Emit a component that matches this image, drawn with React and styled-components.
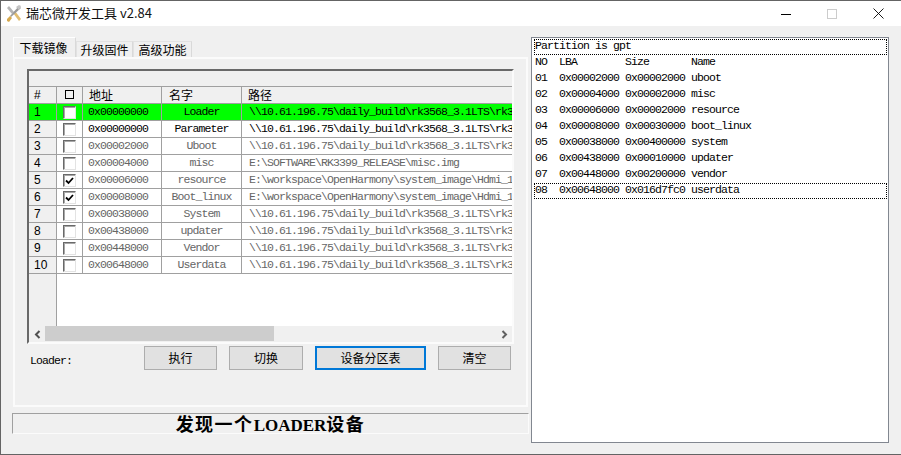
import styled, { createGlobalStyle } from 'styled-components'

const cjk = '"Noto Sans CJK SC", "Liberation Sans", sans-serif'
const mono = '"Liberation Mono", "Noto Sans CJK SC", monospace'
const line = '#a0a0a0'

const GlobalStyle = createGlobalStyle`
    html, body {
        margin: 0;
        padding: 0;
        background: #f0f0f0;
    }
    * {
        box-sizing: border-box;
    }
`

const Win = styled.div`
    width: 901px;
    height: 455px;
    background: #f0f0f0;
    border-left: 1px solid #646464;
    border-bottom: 1px solid #646464;
    border-top: 1px solid #646464;
    overflow: hidden;
`
const TitleBar = styled.header`
    height: 25px;
    background: #fff;
    display: flex;
    align-items: center;
    padding-left: 4px;
`
const AppTitle = styled.span`
    margin-left: 3px;
    font: 13px/21px ${cjk};
    color: #111;
    flex: 1;
    padding-bottom: 2px;
`
const WinButton = styled.div`
    width: 46px;
    height: 25px;
    display: flex;
    align-items: center;
    justify-content: center;
`
const Body = styled.div`
    display: flex;
    padding: 11px 11px 0 10px;
`
const LeftPane = styled.div`
    width: 518px;
`
const Tabs = styled.nav`
    display: flex;
    align-items: flex-end;
    height: 20px;
    padding-left: 2px;
`
const Tab = styled.div`
    width: ${(p) => p.$w}px;
    height: ${(p) => (p.$active ? 20 : 16)}px;
    background: #f0f0f0;
    border-top: 1px solid ${(p) => (p.$active ? '#fff' : '#e2e2e2')};
    border-left: 1px solid ${(p) => (p.$active ? '#fff' : '#e2e2e2')};
    border-right: 1px solid #d9d9d9;
    font: 12px/16px ${cjk};
    color: #000;
    text-align: center;
    white-space: nowrap;
    padding-top: ${(p) => (p.$active ? 2 : 0)}px;
    padding-right: ${(p) => (p.$active ? 2 : 0)}px;
`
const Panel = styled.section`
    width: 515px;
    height: 350px;
    margin-left: 2px;
    border: 2px solid #fbfbfb;
    padding: 10px 0 0 12px;
`
const GridFrame = styled.div`
    width: 487px;
    height: 275px;
    border-top: 2px solid #696969;
    border-left: 2px solid #696969;
    border-right: 2px solid #fbfbfb;
    border-bottom: 2px solid #fbfbfb;
    display: flex;
    flex-direction: column;
`
const TopBand = styled.div`
    height: 16px;
    border-bottom: 1px solid ${line};
    flex: none;
`
const Row = styled.div`
    display: grid;
    grid-template-columns: 28px 26px 79px 80px 1fr;
    height: 17px;
    flex: none;
    border-bottom: 1px solid ${line};
    background: ${(p) => (p.$selected ? '#00ff00' : '#fff')};
    color: ${(p) => (p.$muted ? '#666' : '#000')};
    font: 11.5px/16px ${mono};
    letter-spacing: -0.9px;
    overflow: hidden;
`
const HeadRow = styled(Row)`
    background: #f0f0f0;
    font: 12px/16px ${cjk};
    letter-spacing: 0;
    color: #000;
`
const Cell = styled.div`
    border-right: 1px solid ${line};
    white-space: nowrap;
    overflow: hidden;
    text-align: ${(p) => p.$align || 'left'};
    padding-left: ${(p) => p.$pad || 0}px;
    &:last-child {
        border-right: 0;
    }
`
const NumCell = styled(Cell)`
    background: ${(p) => (p.$selected ? '#00ff00' : '#f0f0f0')};
    color: #000;
    font: 12px/16px "Liberation Sans", sans-serif;
    letter-spacing: 0;
    padding-left: 5px;
`
const CheckCell = styled(Cell)`
    display: flex;
    align-items: center;
    justify-content: center;
`
const Check = styled.div`
    width: 13px;
    height: 13px;
    margin-top: 1px;
    background: #fff;
    border-top: 1px solid #696969;
    border-left: 1px solid #696969;
    border-right: 1px solid #e3e3e3;
    border-bottom: 1px solid #e3e3e3;
    box-shadow: inset 1px 1px 0 #a8a8a8;
    display: flex;
    align-items: center;
    justify-content: center;
`
const HeadBox = styled.div`
    width: 9px;
    height: 9px;
    margin: 3px auto 0;
    border: 1px solid #000;
`
const EmptyArea = styled.div`
    flex: 1;
    display: grid;
    grid-template-columns: 28px 1fr;
    background: #fff;
`
const EmptyFixed = styled.div`
    background: #f0f0f0;
    border-right: 1px solid ${line};
`
const ScrollBar = styled.div`
    height: 16px;
    flex: none;
    background: #f0f0f0;
    display: flex;
    align-items: center;
`
const ScrollArrow = styled.div`
    width: 16px;
    height: 16px;
    flex: none;
    display: flex;
    align-items: center;
    justify-content: center;
`
const ScrollTrack = styled.div`
    flex: 1;
    height: 16px;
`
const ScrollThumb = styled.div`
    width: 229px;
    height: 15px;
    background: #cdcdcd;
`
const Controls = styled.div`
    display: flex;
    width: 487px;
    margin-top: 2px;
    padding-right: 3px;
    gap: 12px;
`
const LoaderLabel = styled.div`
    flex: 1;
    font: 11.5px/30px ${mono};
    letter-spacing: -0.9px;
    padding-left: 3px;
    color: #000;
`
const Button = styled.button`
    width: ${(p) => p.$w}px;
    height: 24px;
    padding: 0;
    background: #e1e1e1;
    border: ${(p) => (p.$focus ? '2px solid #0078d7' : '1px solid #adadad')};
    font: 12px/20px ${cjk};
    color: #000;
`
const StatusBar = styled.div`
    width: 517px;
    height: 21px;
    margin: 6px 0 0 1px;
    border-top: 1px solid ${line};
    border-left: 1px solid ${line};
    border-right: 1px solid #fbfbfb;
    border-bottom: 1px solid #fbfbfb;
    font: bold 17px/19px "Liberation Serif", serif;
    color: #000;
    text-align: center;
`
const StatusCjk = styled.span`
    font: bold 18px/19px "Noto Sans CJK SC", sans-serif;
    letter-spacing: 1.5px;
`
const LogBox = styled.aside`
    width: 358px;
    height: 406px;
    margin-left: 2px;
    background: #fff;
    border: 1px solid #828790;
    padding: 1px;
`
const LogLine = styled.div`
    height: 16px;
    margin-left: 1px;
    padding-left: 1px;
    font: 11.5px/14px ${mono};
    letter-spacing: -0.9px;
    white-space: pre;
    color: #000;
    outline: ${(p) => (p.$focus ? '1px dotted #000' : 'none')};
    outline-offset: -1px;
`

const headers = [
    { label: '地址', pad: 6 },
    { label: '名字', pad: 7 },
    { label: '路径', pad: 6 },
]

const latest = '\\\\10.61.196.75\\daily_build\\rk3568_3.1LTS\\rk3'
const hdmi = 'E:\\workspace\\OpenHarmony\\system_image\\Hdmi_1'

const rows = [
    { id: 1, addr: '0x00000000', name: 'Loader', path: latest, selected: true },
    { id: 2, addr: '0x00000000', name: 'Parameter', path: latest },
    { id: 3, addr: '0x00002000', name: 'Uboot', path: latest, muted: true },
    { id: 4, addr: '0x00004000', name: 'misc', path: 'E:\\SOFTWARE\\RK3399_RELEASE\\misc.img', muted: true },
    { id: 5, addr: '0x00006000', name: 'resource', path: hdmi, muted: true, checked: true },
    { id: 6, addr: '0x00008000', name: 'Boot_linux', path: hdmi, muted: true, checked: true },
    { id: 7, addr: '0x00038000', name: 'System', path: latest, muted: true },
    { id: 8, addr: '0x00438000', name: 'updater', path: latest, muted: true },
    { id: 9, addr: '0x00448000', name: 'Vendor', path: latest, muted: true },
    { id: 10, addr: '0x00648000', name: 'Userdata', path: latest, muted: true },
]

const logLines = [
    'Partition is gpt',
    'NO  LBA        Size       Name',
    '01  0x00002000 0x00002000 uboot',
    '02  0x00004000 0x00002000 misc',
    '03  0x00006000 0x00002000 resource',
    '04  0x00008000 0x00030000 boot_linux',
    '05  0x00038000 0x00400000 system',
    '06  0x00438000 0x00010000 updater',
    '07  0x00448000 0x00200000 vendor',
    '08  0x00648000 0x016d7fc0 userdata',
]

function ToolsIcon() {
    return (
        <svg width="18" height="18" viewBox="0 0 18 18">
            <path d="M2 3 L4 1 L9 7 L7 9 Z" fill="#b5b5b5" />
            <path d="M8 8 L10 6 L16 14 L14 16 Z" fill="#e0bd72" />
            <path d="M14 1 L16 3 L6 12 L5 11 Z" fill="#9a9a9a" />
            <path d="M11 2 L14 0 L16 1 L14 5 Z" fill="#c4c4c4" />
            <path d="M2 14 L5 11 L7 13 L4 17 L2 16 Z" fill="#d6a94e" />
        </svg>
    )
}

function CheckMark() {
    return (
        <svg width="9" height="8" viewBox="0 0 9 8">
            <path d="M1 3.5 L3.5 6 L8 1" fill="none" stroke="#000" strokeWidth="1.8" />
        </svg>
    )
}

function Chevron({ dir, color }) {
    return (
        <svg width="7" height="9" viewBox="0 0 7 9">
            <path
                d={dir === 'left' ? 'M5.5 1 L2 4.5 L5.5 8' : 'M1.5 1 L5 4.5 L1.5 8'}
                fill="none"
                stroke={color}
                strokeWidth="2"
            />
        </svg>
    )
}

export default function App() {
    return (
        <Win>
            <GlobalStyle />
            <TitleBar>
                <ToolsIcon />
                <AppTitle>瑞芯微开发工具 v2.84</AppTitle>
                <WinButton>
                    <svg width="10" height="10" viewBox="0 0 10 10">
                        <path d="M0 5.5 H10" stroke="#000" />
                    </svg>
                </WinButton>
                <WinButton>
                    <svg width="10" height="10" viewBox="0 0 10 10">
                        <rect x="0.5" y="0.5" width="9" height="9" fill="none" stroke="#ccc" />
                    </svg>
                </WinButton>
                <WinButton>
                    <svg width="11" height="11" viewBox="0 0 11 11">
                        <path d="M0.5 0.5 L10.5 10.5 M10.5 0.5 L0.5 10.5" stroke="#000" strokeWidth="0.9" />
                    </svg>
                </WinButton>
            </TitleBar>
            <Body>
                <LeftPane>
                    <Tabs>
                        <Tab $w={63} $active>下载镜像</Tab>
                        <Tab $w={57}>升级固件</Tab>
                        <Tab $w={59}>高级功能</Tab>
                    </Tabs>
                    <Panel>
                        <GridFrame>
                            <TopBand />
                            <HeadRow>
                                <NumCell>#</NumCell>
                                <Cell><HeadBox /></Cell>
                                {headers.map((h) => (
                                    <Cell key={h.label} $pad={h.pad}>{h.label}</Cell>
                                ))}
                            </HeadRow>
                            {rows.map((r) => (
                                <Row key={r.id} $selected={r.selected} $muted={r.muted}>
                                    <NumCell $selected={r.selected}>{r.id}</NumCell>
                                    <CheckCell>
                                        <Check>{r.checked && <CheckMark />}</Check>
                                    </CheckCell>
                                    <Cell $pad={5}>{r.addr}</Cell>
                                    <Cell $align="center">{r.name}</Cell>
                                    <Cell $pad={7}>{r.path}</Cell>
                                </Row>
                            ))}
                            <EmptyArea>
                                <EmptyFixed />
                                <div />
                            </EmptyArea>
                            <ScrollBar>
                                <ScrollArrow><Chevron dir="left" color="#505050" /></ScrollArrow>
                                <ScrollTrack><ScrollThumb /></ScrollTrack>
                                <ScrollArrow><Chevron dir="right" color="#606060" /></ScrollArrow>
                            </ScrollBar>
                        </GridFrame>
                        <Controls>
                            <LoaderLabel>Loader:</LoaderLabel>
                            <Button $w={73}>执行</Button>
                            <Button $w={74}>切换</Button>
                            <Button $w={111} $focus>设备分区表</Button>
                            <Button $w={73}>清空</Button>
                        </Controls>
                    </Panel>
                    <StatusBar>
                        <StatusCjk>发现一个</StatusCjk>LOADER<StatusCjk>设备</StatusCjk>
                    </StatusBar>
                </LeftPane>
                <LogBox>
                    {logLines.map((text, i) => (
                        <LogLine key={text} $focus={i === 0 || i === 9}>{text}</LogLine>
                    ))}
                </LogBox>
            </Body>
        </Win>
    )
}
